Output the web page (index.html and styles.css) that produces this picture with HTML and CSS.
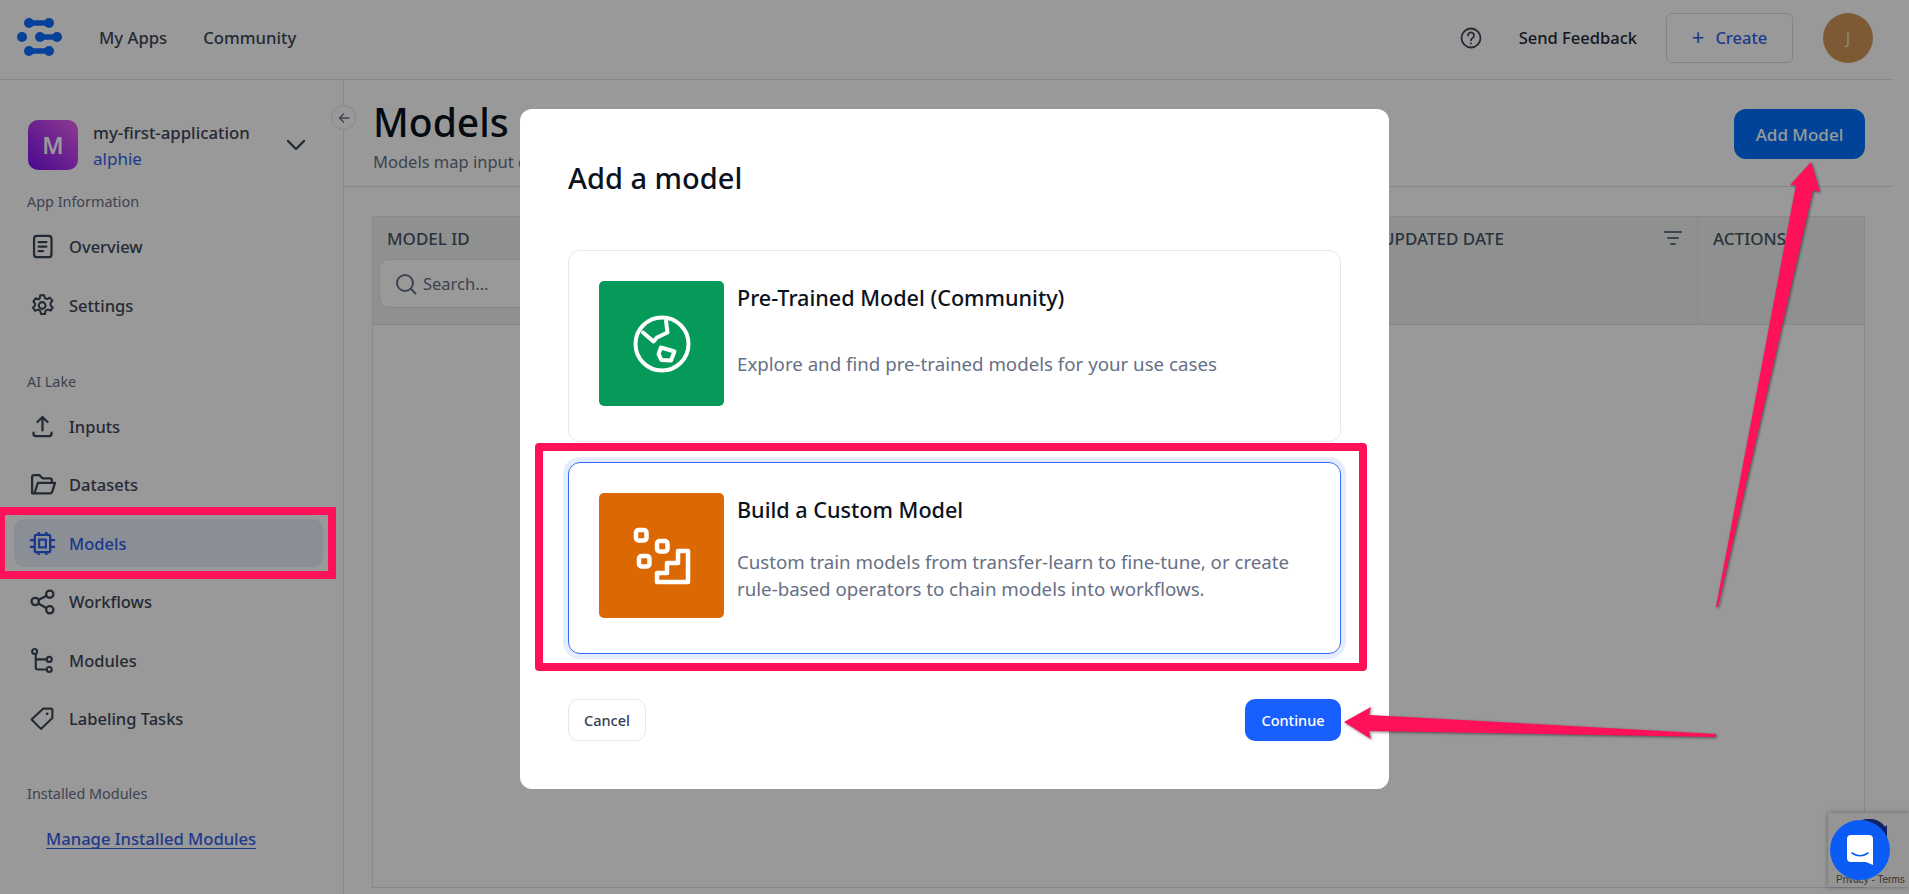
FILE: index.html
```html
<!DOCTYPE html>
<html lang="en">
<head>
  <meta charset="UTF-8">
  <title>Models - my-first-application</title>
  <link rel="stylesheet" href="styles.css">
</head>
<body>

  <div class="page">
    <header class="topbar">
      <svg class="logo" width="46" height="40" viewBox="0 0 46 40">
        <g fill="#0a6cff" stroke="#0a6cff">
          <path d="M12 5H32" stroke-width="5.5"/><circle cx="12" cy="5" r="5" stroke="none"/><circle cx="32" cy="5" r="5" stroke="none"/>
          <circle cx="5" cy="19" r="5" stroke="none"/>
          <path d="M23 19H40" stroke-width="5.5"/><circle cx="23" cy="19" r="5" stroke="none"/><circle cx="40" cy="19" r="5" stroke="none"/>
          <path d="M12 33H32" stroke-width="5.5"/><circle cx="12" cy="33" r="5" stroke="none"/><circle cx="32" cy="33" r="5" stroke="none"/>
        </g>
      </svg>
      <nav class="topnav">
        <a>My Apps</a>
        <a>Community</a>
      </nav>
      <div class="top-right">
        <svg class="help" width="22" height="22" viewBox="0 0 22 22" fill="none" stroke="#3d4757" stroke-width="1.8" stroke-linecap="round">
          <circle cx="11" cy="11" r="9.5"/>
          <path d="M8 8.5a3 3 0 1 1 4.6 2.5c-1 .6-1.6 1.2-1.6 2.3"/>
          <path d="M11 16.4v.1"/>
        </svg>
        <span class="feedback">Send Feedback</span>
        <button class="create-btn"><span class="plus">+</span>Create</button>
        <div class="avatar">J</div>
      </div>
    </header>

    <div class="main">
      <aside class="sidebar">
        <button class="collapse">
          <svg width="12" height="12" viewBox="0 0 12 12" fill="none" stroke="#667085" stroke-width="1.3" stroke-linecap="round" stroke-linejoin="round"><path d="M11 6H1.5M5.5 2L1.5 6l4 4"/></svg>
        </button>

        <div class="app-switch">
          <div class="app-icon">M</div>
          <div class="app-names">
            <div class="app-name">my-first-application</div>
            <div class="app-owner">alphie</div>
          </div>
          <svg class="chevron" width="20" height="12" viewBox="0 0 20 12" fill="none" stroke="#3d4757" stroke-width="2.4" stroke-linecap="round" stroke-linejoin="round"><path d="M2 2l8 8 8-8"/></svg>
        </div>

        <div class="side-label">App Information</div>
        <a class="side-item first-item">
          <svg viewBox="0 0 24 24" fill="none" stroke="currentColor" stroke-width="2" stroke-linecap="round" stroke-linejoin="round"><rect x="4.5" y="2.5" width="15.5" height="19" rx="2.5"/><path d="M8.5 8h7M8.5 12h7M8.5 16h4"/></svg>
          Overview
        </a>
        <a class="side-item">
          <svg viewBox="0 0 24 24" fill="none" stroke="currentColor" stroke-width="1.8" stroke-linecap="round" stroke-linejoin="round"><path d="M10 2.800h3.500l.6 2.700 2 .9 2.400-1.400 2.300 2.600-1.700 2.200.1 2.200 1.900 1.700-1.900 2.900-2.600-1-1.900 1.200-.5 2.800h-3.500l-.7-2.800-1.900-1.100-2.600 1-2-2.800 1.900-1.900V10.400L3.900 8.400l2-2.800 2.600 1 1-.8z"/><circle cx="11.7" cy="12" r="3"/></svg>
          Settings
        </a>

        <div class="side-label side-label-lake">AI Lake</div>
        <a class="side-item">
          <svg viewBox="0 0 24 24" fill="none" stroke="currentColor" stroke-width="2" stroke-linecap="round" stroke-linejoin="round"><path d="M12 15.5V4M7.5 8L12 3.5 16.5 8M4 17.5v1a2 2 0 0 0 2 2h12a2 2 0 0 0 2-2v-1"/></svg>
          Inputs
        </a>
        <a class="side-item">
          <svg viewBox="0 0 26 24" fill="none" stroke="currentColor" stroke-width="2.2" stroke-linecap="round" stroke-linejoin="round"><path d="M3 20V5a2 2 0 0 1 2-2h5l3 3h7a2 2 0 0 1 2 2v2.500"/><path d="M3 20.500h17.500a2 2 0 0 0 1.900-1.500L25 10.500H8.500L5.800 19"/></svg>
          Datasets
        </a>
        <a class="side-item active">
          <svg viewBox="0 0 28 26" fill="none" stroke="currentColor" stroke-width="2.4"><rect x="6" y="4" width="16" height="18" rx="1.5"/><rect x="10.500" y="9" width="7" height="8" stroke-width="2.2"/><path d="M10 1v3M18 1v3M10 22v3M18 22v3M1 9.500h5M1 16.500h5M22 9.500h5M22 16.500h5"/></svg>
          Models
        </a>
        <a class="side-item">
          <svg viewBox="0 0 26 26" fill="none" stroke="currentColor" stroke-width="2.2"><circle cx="20" cy="6" r="3.5"/><circle cx="6" cy="13" r="3.5"/><circle cx="20" cy="21" r="3.5"/><path d="M9 11.500l8-4M9 15l8 4.500"/></svg>
          Workflows
        </a>
        <a class="side-item">
          <svg viewBox="0 0 24 24" fill="none" stroke="currentColor" stroke-width="1.9"><circle cx="5" cy="4" r="2.2"/><circle cx="18" cy="11" r="2.2"/><circle cx="18" cy="20" r="2.2"/><path d="M6 6.200V18a2 2 0 0 0 2 2h7.800M6 11h9.800"/></svg>
          Modules
        </a>
        <a class="side-item">
          <svg viewBox="0 0 26 24" fill="none" stroke="currentColor" stroke-width="2" stroke-linejoin="round"><path d="M2.500 13L13.500 2.500h7.500a1.500 1.500 0 0 1 1.500 1.500v7.500L11.500 22z"/><circle cx="17.5" cy="7.5" r="1.3" fill="currentColor" stroke="none"/></svg>
          Labeling Tasks
        </a>

        <div class="side-label side-label-mods">Installed Modules</div>
        <a class="manage-link">Manage Installed Modules</a>
      </aside>

      <section class="content">
        <div class="content-head">
          <div>
            <h1>Models</h1>
            <p>Models map input data to predictions</p>
          </div>
          <button class="add-btn">Add Model</button>
        </div>

        <div class="table-box">
          <div class="table-head">
            <div class="col col-id">
              <span>MODEL ID</span>
              <div class="search">
                <svg width="22" height="22" viewBox="0 0 22 22" fill="none" stroke="#667085" stroke-width="2" stroke-linecap="round"><circle cx="10" cy="10" r="8"/><path d="M16 16l4.500 4.500"/></svg>
                Search...
              </div>
            </div>
            <div class="col col-date">
              <span>UPDATED DATE</span>
              <svg width="18" height="14" viewBox="0 0 18 14" fill="none" stroke="#667085" stroke-width="2" stroke-linecap="round"><path d="M1 1h16M4 7h10M7 13h4"/></svg>
            </div>
            <div class="col col-actions"><span>ACTIONS</span></div>
          </div>
        </div>
      </section>
    </div>

    <div class="recaptcha">
      <svg width="40" height="40" viewBox="0 0 40 40" fill="none" stroke="#1c3aa9" stroke-width="8"><path d="M4 20a16 16 0 0 1 30-8"/><path d="M38 6v14H24z" fill="#1c3aa9" stroke="none"/></svg>
      <span class="recaptcha-text">Privacy - Terms</span>
    </div>
  </div>

  <div class="overlay">
    <div class="modal">
      <h2>Add a model</h2>

      <div class="option">
        <div class="option-icon green">
          <svg width="60" height="60" viewBox="0 0 60 60" fill="none" stroke="#fff" stroke-width="4" stroke-linejoin="round" stroke-linecap="round">
            <circle cx="30" cy="30" r="26.5"/>
            <path d="M11 18.500l10.500 9 3.500-4 10.500-5-1.500-11.500"/>
            <path d="M29 33.500l13.500 4-3.500 9-9.500-.5-3-6z"/>
          </svg>
        </div>
        <div class="option-text">
          <h3>Pre-Trained Model (Community)</h3>
          <p class="desc-one">Explore and find pre-trained models for your use cases</p>
        </div>
      </div>

      <div class="option selected">
        <div class="option-icon orange">
          <svg width="60" height="60" viewBox="0 0 60 60" fill="none" stroke="#fff" stroke-width="4.5" stroke-linejoin="round">
            <rect x="4" y="4" width="10.5" height="10.5" rx="2.5"/>
            <rect x="25" y="15" width="10.5" height="10.5" rx="2.5"/>
            <rect x="7" y="30" width="10.5" height="10.5" rx="2.5"/>
            <path d="M25 56h31V25H46v12H35v10H25z"/>
          </svg>
        </div>
        <div class="option-text">
          <h3>Build a Custom Model</h3>
          <p class="desc-two">Custom train models from transfer-learn to fine-tune, or create rule-based operators to chain models into workflows.</p>
        </div>
      </div>

      <div class="modal-foot">
        <button class="cancel-btn">Cancel</button>
        <button class="continue-btn">Continue</button>
      </div>
    </div>
  </div>

  <svg class="marks" width="1909" height="894" viewBox="0 0 1909 894">
    <rect x="539" y="447" width="824" height="220" fill="none" stroke="#ff1159" stroke-width="8" stroke-linejoin="round"/>
    <path d="M0 507H336V579H0V571H328V515H5V571H0z" fill="#ff1159"/>
    <g fill="#ff1159" class="arrow">
      <path d="M1811 162L1820 192 1813 190 1718 607 1716 607 1796 185 1790 185z"/>
      <path d="M1344 722L1371 707 1369 715 1716 734 1716 737 1369 731 1371 739z"/>
    </g>
  </svg>

  <div class="chat-bubble">
    <svg width="28" height="32" viewBox="0 0 28 32" fill="#fff"><path d="M5 1h18a4 4 0 0 1 4 4v26l-7-3H5a4 4 0 0 1-4-4V5a4 4 0 0 1 4-4z"/><path d="M6 19c5 3.500 11 3.500 16 0" fill="none" stroke="#0a5cf5" stroke-width="1.6" stroke-linecap="round"/></svg>
  </div>

</body>
</html>
```

FILE: styles.css
```css
* {
  box-sizing: border-box;
}

html, body {
  height: 100%;
  margin: 0;
  overflow: hidden;
}

body {
  font-family: "Noto Sans", Arial, sans-serif;
  color: #1f2937;
  background: #fff;
}

button {
  font-family: inherit;
  cursor: pointer;
}

.page {
  width: 1893px;
  height: 894px;
  display: flex;
  flex-direction: column;
}

/* top bar */
.topbar {
  height: 80px;
  flex: none;
  display: flex;
  align-items: center;
  padding: 0 20px 4px 17px;
  border-bottom: 1px solid #dfe3e8;
}

.logo {
  display: block;
}

.topnav {
  display: flex;
  gap: 36px;
  margin-left: 36px;
  font-size: 16.7px;
  font-weight: 500;
  color: #3d4757;
}

.top-right {
  margin-left: auto;
  display: flex;
  align-items: center;
}

.feedback {
  margin-left: 37px;
  font-size: 16.5px;
  font-weight: 500;
  color: #1f2937;
}

.create-btn {
  width: 127px;
  height: 50px;
  margin-left: 29px;
  display: flex;
  align-items: center;
  justify-content: center;
  gap: 11px;
  background: #fff;
  border: 1px solid #d8dce3;
  border-radius: 6px;
  color: #3562e8;
  font-size: 16.5px;
  font-weight: 500;
}

.plus {
  font-size: 22px;
  font-weight: 400;
  line-height: 1;
  margin-top: -4px;
}

.avatar {
  width: 50px;
  height: 50px;
  margin-left: 30px;
  border-radius: 50%;
  background: #d09655;
  color: #f0e3d0;
  font-size: 16px;
  display: flex;
  align-items: center;
  justify-content: center;
}

/* sidebar */
.main {
  flex: 1;
  display: flex;
  min-height: 0;
}

.sidebar {
  position: relative;
  width: 344px;
  flex: none;
  border-right: 1px solid #dfe3e8;
  padding: 40px 20px 0 14px;
}

.collapse {
  position: absolute;
  top: 25px;
  right: -13px;
  width: 25px;
  height: 25px;
  padding: 0;
  border: 1px solid #dfe3e8;
  border-radius: 50%;
  background: #fff;
  display: flex;
  align-items: center;
  justify-content: center;
}

.app-switch {
  display: flex;
  align-items: center;
  padding-left: 14px;
  height: 50px;
}

.app-icon {
  width: 50px;
  height: 50px;
  border-radius: 10px;
  background: linear-gradient(to bottom left, #ed62f0, #7a0ff0);
  color: #fff;
  font-size: 23px;
  font-weight: 600;
  display: flex;
  align-items: center;
  justify-content: center;
}

.app-names {
  margin-left: 15px;
  flex: 1;
  padding-top: 1px;
}

.app-name {
  font-size: 16.8px;
  font-weight: 500;
  line-height: 26px;
  color: #3d4757;
}

.app-owner {
  font-size: 17px;
  line-height: 26px;
  color: #3562e8;
}

.chevron {
  margin-right: 17px;
}

.side-label {
  margin: 21px 0 0 13px;
  font-size: 14.4px;
  line-height: 22px;
  color: #667085;
}

.side-label-lake {
  margin-top: 42.5px;
  line-height: 20px;
}

.side-label-mods {
  margin-top: 41.5px;
  line-height: 20px;
}

.side-item {
  display: flex;
  align-items: center;
  height: 48px;
  margin-top: 10.5px;
  padding-left: 16px;
  border-radius: 10px;
  font-size: 16.5px;
  font-weight: 500;
  color: #3d4757;
}

.first-item {
  margin-top: 9.5px;
}

.side-item svg {
  flex: none;
  width: 27px;
  height: 27px;
  margin-right: 13px;
  margin-left: -1px;
}

.side-item.active {
  background: #e7eefb;
  color: #2c5ce8;
}

.manage-link {
  display: inline-block;
  margin: 25px 0 0 32px;
  font-size: 16.6px;
  font-weight: 500;
  line-height: 19px;
  color: #3562e8;
  border-bottom: 1px solid #3562e8;
}

/* models page */
.content {
  flex: 1;
  display: flex;
  flex-direction: column;
  min-width: 0;
}

.content-head {
  height: 107px;
  flex: none;
  display: flex;
  justify-content: space-between;
  align-items: flex-start;
  padding: 18px 28px 0 29px;
  border-bottom: 1px solid #dfe3e8;
}

.content-head h1 {
  margin: 0;
  font-size: 39px;
  font-weight: 500;
  line-height: 48px;
  color: #0b1220;
}

.content-head p {
  margin: 5px 0 0;
  font-size: 16.5px;
  line-height: 22px;
  color: #667085;
}

.add-btn {
  width: 131px;
  height: 50px;
  margin-top: 11px;
  border: none;
  border-radius: 12px;
  background: #0071ff;
  color: #fff;
  font-size: 17px;
  font-weight: 500;
}

.table-box {
  margin: 29px 28px 6px 28px;
  flex: 1;
  border: 1px solid #dfe3e8;
}

.table-head {
  height: 108px;
  display: flex;
  background: #eef2f0;
  border-bottom: 1px solid #dfe3e8;
  font-size: 17px;
  font-weight: 500;
  color: #4a5464;
}

.col {
  padding: 10px 14px;
}

.col-id {
  width: 400px;
}

.search {
  display: flex;
  align-items: center;
  gap: 6px;
  width: 340px;
  height: 49px;
  margin: 9px 0 0 -8px;
  padding-left: 15px;
  background: #fff;
  border: 1px solid #dfe3e8;
  border-radius: 10px;
  color: #667085;
  font-size: 16.5px;
  font-weight: 400;
}

.col-date {
  flex: 1;
  display: flex;
  justify-content: space-between;
  align-items: flex-start;
  padding-right: 15px;
  border-right: 1px solid #dfe3e8;
  padding-left: 609px;
}

.col-date svg {
  margin-top: 4px;
}

.col-actions {
  width: 166px;
  padding-left: 15px;
}

/* recaptcha badge */
.recaptcha {
  position: absolute;
  left: 1828px;
  top: 813px;
  width: 81px;
  height: 74px;
  background: #f9f9f9;
  box-shadow: 0 0 5px rgba(0, 0, 0, 0.35);
  display: flex;
  flex-direction: column;
  align-items: center;
  padding-top: 6px;
}

.recaptcha-text {
  position: absolute;
  left: 8px;
  bottom: 0;
  font-family: "Liberation Sans", Arial, sans-serif;
  font-size: 10px;
  line-height: 14px;
  white-space: nowrap;
  color: #555;
}

/* dialog */
.overlay {
  position: fixed;
  inset: 0;
  padding-top: 4px;
  background: rgba(0, 0, 0, 0.4);
  display: flex;
  align-items: center;
  justify-content: center;
}

.modal {
  width: 869px;
  height: 680px;
  padding: 46px 48px 0;
  background: #fff;
  border-radius: 12px;
  display: flex;
  flex-direction: column;
}

.modal h2 {
  margin: 0 0 50px;
  font-size: 29px;
  font-weight: 500;
  line-height: 45px;
  color: #0b1220;
}

.option {
  height: 192px;
  display: flex;
  padding: 30px;
  border: 1px solid #e4e7ec;
  border-radius: 12px;
}

.option.selected {
  margin-top: 20px;
  border-color: #2f6bff;
  box-shadow: 0 0 0 5px #e5edfd;
}

.option-icon {
  width: 125px;
  height: 125px;
  flex: none;
  border-radius: 5px;
  display: flex;
  align-items: center;
  justify-content: center;
}

.green {
  background: #059a5a;
}

.orange {
  background: #dc6803;
}

.option-text {
  margin-left: 13px;
}

.option h3 {
  margin: 1px 0 0;
  font-size: 21.6px;
  font-weight: 500;
  line-height: 32px;
  color: #0b1220;
}

.option p {
  margin: 0;
  font-size: 18.7px;
  line-height: 27px;
  color: #667085;
}

.desc-one {
  padding-top: 36px;
}

.desc-two {
  padding-top: 22px;
}

.modal-foot {
  display: flex;
  justify-content: space-between;
  margin-top: 45px;
}

.cancel-btn {
  width: 78px;
  height: 42px;
  background: #fff;
  border: 1px solid #e4e7ec;
  border-radius: 10px;
  font-size: 14.5px;
  font-weight: 500;
  color: #344054;
}

.continue-btn {
  width: 96px;
  height: 42px;
  border: none;
  border-radius: 10px;
  background: #195fff;
  color: #fff;
  font-size: 14.5px;
  font-weight: 500;
}

/* annotations drawn on top of the screenshot */
.marks {
  position: fixed;
  left: 0;
  top: 0;
  pointer-events: none;
}

.arrow {
  filter: drop-shadow(1px 1px 1.5px rgba(0, 0, 0, 0.5));
}

.chat-bubble {
  position: fixed;
  left: 1830px;
  top: 820px;
  width: 60px;
  height: 60px;
  border-radius: 50%;
  background: #0a5cf5;
  display: flex;
  align-items: center;
  justify-content: center;
}
```
